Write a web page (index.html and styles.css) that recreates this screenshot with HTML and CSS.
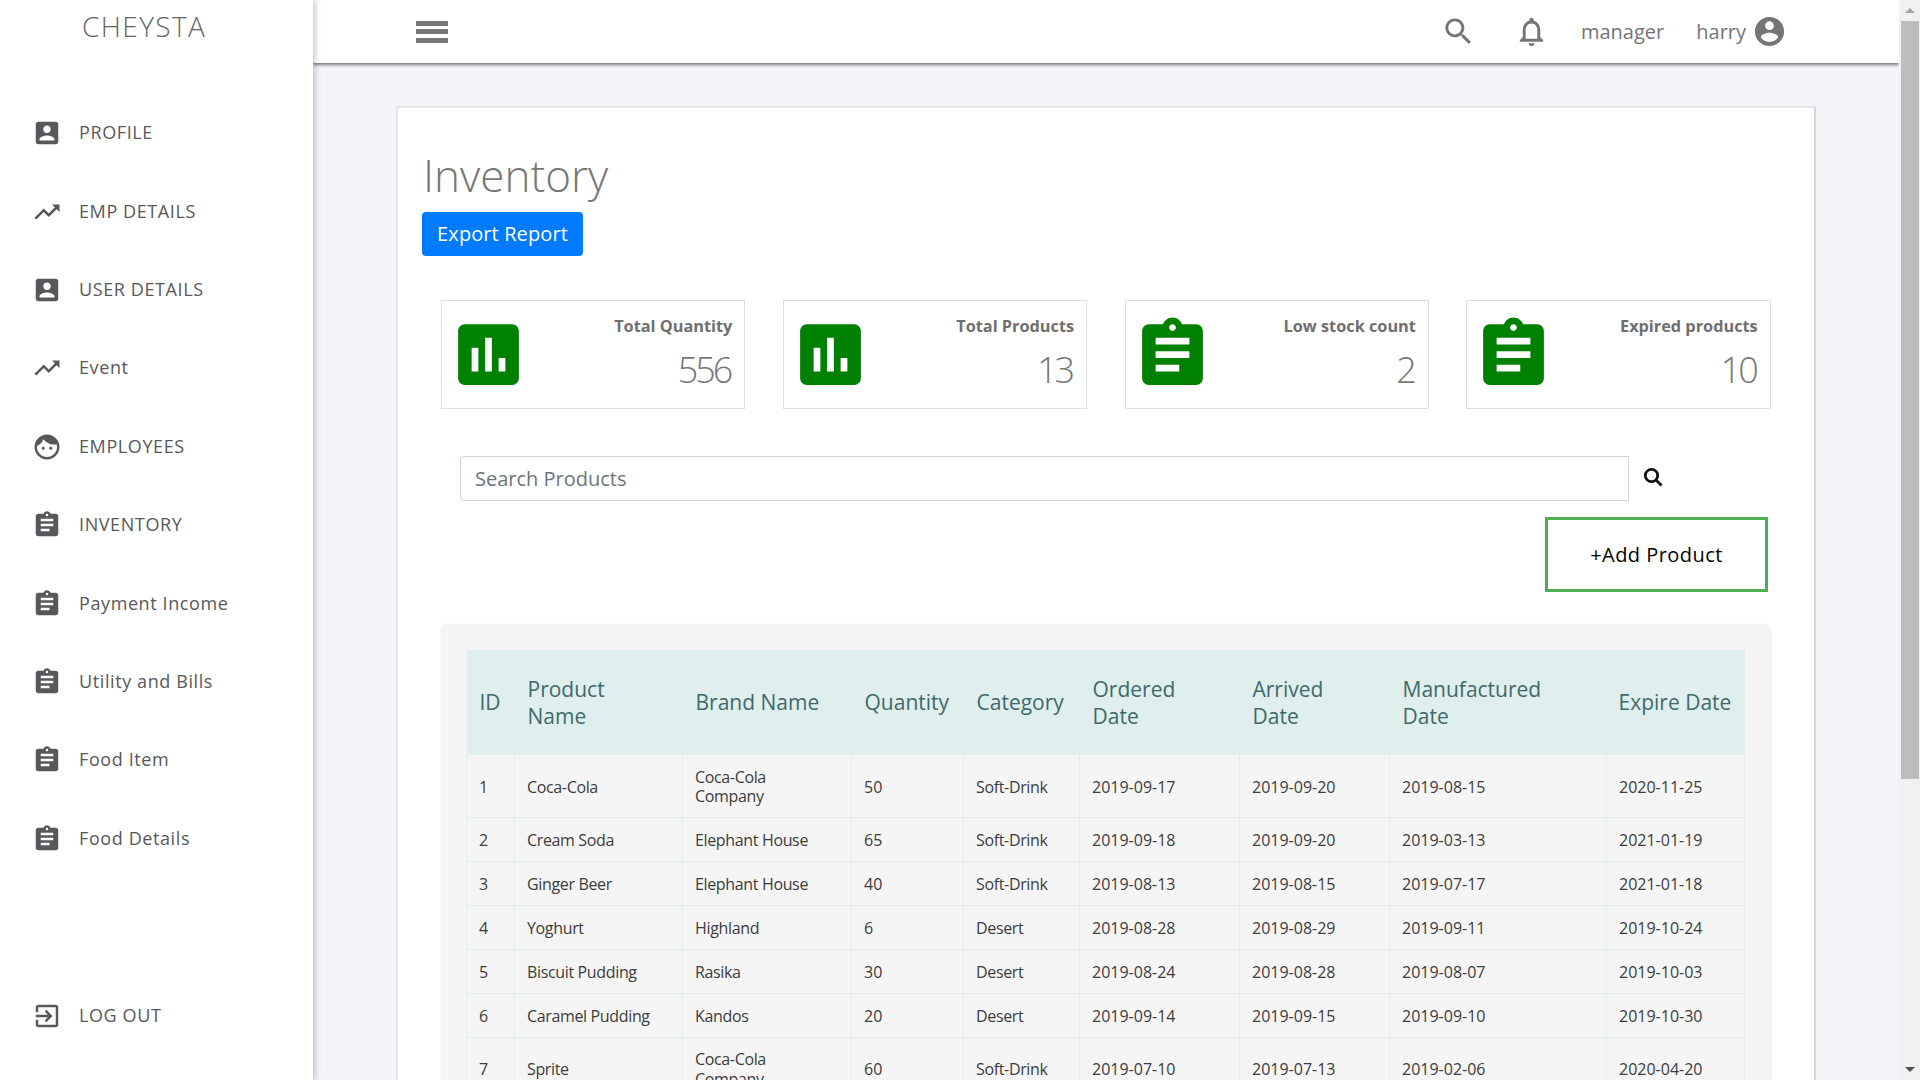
FILE: index.html
```html
<!DOCTYPE html>
<html>
<head>
  <meta charset="UTF-8">
  <title>Inventory</title>
  <link rel="stylesheet" href="styles.css">
</head>
<body>

<svg class="icon-defs" xmlns="http://www.w3.org/2000/svg">
  <symbol id="i-box" viewBox="0 0 24 24"><path d="M3 5v14c0 1.1.89 2 2 2h14c1.1 0 2-.9 2-2V5c0-1.1-.9-2-2-2H5c-1.11 0-2 .9-2 2zm12 4c0 1.66-1.34 3-3 3s-3-1.34-3-3 1.34-3 3-3 3 1.34 3 3zm-9 8c0-2 4-3.1 6-3.1s6 1.1 6 3.1v1H6v-1z"/></symbol>
  <symbol id="i-trend" viewBox="0 0 24 24"><path d="M16 6l2.29 2.29-4.88 4.88-4-4L2 16.59 3.41 18l6-6 4 4 6.3-6.29L22 12V6z"/></symbol>
  <symbol id="i-face" viewBox="0 0 24 24"><path d="M9 11.75c-.69 0-1.25.56-1.25 1.25s.56 1.25 1.25 1.25 1.25-.56 1.25-1.25-.56-1.25-1.25-1.25zm6 0c-.69 0-1.25.56-1.25 1.25s.56 1.25 1.25 1.25 1.25-.56 1.25-1.25-.56-1.25-1.25-1.25zM12 2C6.48 2 2 6.48 2 12s4.48 10 10 10 10-4.48 10-10S17.52 2 12 2zm0 18c-4.41 0-8-3.59-8-8 0-.29.02-.58.05-.86 2.36-1.05 4.23-2.98 5.21-5.37C11.07 8.33 14.05 10 17.42 10c.78 0 1.53-.09 2.25-.26.21.71.33 1.47.33 2.26 0 4.41-3.59 8-8 8z"/></symbol>
  <symbol id="i-clip" viewBox="0 0 24 24"><path d="M19 3h-4.18C14.4 1.84 13.3 1 12 1c-1.3 0-2.4.84-2.82 2H5c-1.1 0-2 .9-2 2v14c0 1.1.9 2 2 2h14c1.1 0 2-.9 2-2V5c0-1.1-.9-2-2-2zm-7 0c.55 0 1 .45 1 1s-.45 1-1 1-1-.45-1-1 .45-1 1-1zm2 14H7v-2h7v2zm3-4H7v-2h10v2zm0-4H7V7h10v2z"/></symbol>
  <symbol id="i-exit" viewBox="0 0 24 24"><path d="M10.09 15.59L11.5 17l5-5-5-5-1.41 1.41L12.67 11H3v2h9.67l-2.58 2.59zM19 3H5c-1.11 0-2 .9-2 2v4h2V5h14v14H5v-4H3v4c0 1.1.89 2 2 2h14c1.1 0 2-.9 2-2V5c0-1.1-.9-2-2-2z"/></symbol>
  <symbol id="i-chart" viewBox="0 0 24 24"><path d="M19 3H5c-1.1 0-2 .9-2 2v14c0 1.1.9 2 2 2h14c1.1 0 2-.9 2-2V5c0-1.1-.9-2-2-2zM9 17H7v-7h2v7zm4 0h-2V7h2v10zm4 0h-2v-4h2v4z"/></symbol>
  <symbol id="i-search" viewBox="0 0 24 24"><path d="M15.5 14h-.79l-.28-.27C15.41 12.59 16 11.11 16 9.5 16 5.91 13.09 3 9.5 3S3 5.91 3 9.5 5.91 16 9.5 16c1.61 0 3.09-.59 4.23-1.57l.27.28v.79l5 4.99L20.49 19l-4.99-5zm-6 0C7.01 14 5 11.99 5 9.5S7.01 5 9.5 5 14 7.01 14 9.5 11.99 14 9.5 14z"/></symbol>
  <symbol id="i-bell" viewBox="0 0 24 24"><path d="M12 22c1.1 0 2-.9 2-2h-4c0 1.1.9 2 2 2zm6-6v-5c0-3.07-1.63-5.64-4.5-6.32V4c0-.83-.67-1.5-1.5-1.5s-1.5.67-1.5 1.5v.68C7.64 5.36 6 7.92 6 11v5l-2 2v1h16v-1l-2-2zm-2 1H8v-6c0-2.48 1.51-4.5 4-4.5s4 2.02 4 4.5v6z"/></symbol>
  <symbol id="i-user" viewBox="0 0 24 24"><path d="M12 2C6.48 2 2 6.48 2 12s4.48 10 10 10 10-4.48 10-10S17.52 2 12 2zm0 3c1.66 0 3 1.34 3 3s-1.34 3-3 3-3-1.34-3-3 1.34-3 3-3zm0 14.2c-2.5 0-4.71-1.28-6-3.22.03-1.99 4-3.08 6-3.08 1.99 0 5.97 1.09 6 3.08-1.29 1.94-3.5 3.22-6 3.22z"/></symbol>
</svg>

<div class="sidebar">
  <div class="logo">CHEYSTA</div>
  <div class="nav">
    <div class="nav-item"><svg class="nav-icon"><use href="#i-box"/></svg>PROFILE</div>
    <div class="nav-item"><svg class="nav-icon"><use href="#i-trend"/></svg>EMP DETAILS</div>
    <div class="nav-item"><svg class="nav-icon"><use href="#i-box"/></svg>USER DETAILS</div>
    <div class="nav-item"><svg class="nav-icon"><use href="#i-trend"/></svg>Event</div>
    <div class="nav-item"><svg class="nav-icon"><use href="#i-face"/></svg>EMPLOYEES</div>
    <div class="nav-item"><svg class="nav-icon"><use href="#i-clip"/></svg>INVENTORY</div>
    <div class="nav-item"><svg class="nav-icon"><use href="#i-clip"/></svg>Payment Income</div>
    <div class="nav-item"><svg class="nav-icon"><use href="#i-clip"/></svg>Utility and Bills</div>
    <div class="nav-item"><svg class="nav-icon"><use href="#i-clip"/></svg>Food Item</div>
    <div class="nav-item"><svg class="nav-icon"><use href="#i-clip"/></svg>Food Details</div>
  </div>
  <div class="nav-item logout"><svg class="nav-icon"><use href="#i-exit"/></svg>LOG OUT</div>
</div>

<div class="main">
  <div class="topbar">
    <div class="burger"><span></span><span></span><span></span></div>
    <div class="top-right">
      <svg class="top-search"><use href="#i-search"/></svg>
      <svg class="top-bell"><use href="#i-bell"/></svg>
      <span class="top-role">manager</span>
      <span class="top-name">harry</span>
      <svg class="top-user"><use href="#i-user"/></svg>
    </div>
  </div>

  <div class="content">
    <div class="card">
      <h1 class="title">Inventory</h1>
      <button class="btn-export">Export Report</button>

      <div class="stats">
        <div class="stat">
          <svg class="stat-icon"><use href="#i-chart"/></svg>
          <div class="stat-text"><div class="stat-label">Total Quantity</div><div class="stat-num">556</div></div>
        </div>
        <div class="stat">
          <svg class="stat-icon"><use href="#i-chart"/></svg>
          <div class="stat-text"><div class="stat-label">Total Products</div><div class="stat-num">13</div></div>
        </div>
        <div class="stat">
          <svg class="stat-icon"><use href="#i-clip"/></svg>
          <div class="stat-text"><div class="stat-label">Low stock count</div><div class="stat-num">2</div></div>
        </div>
        <div class="stat">
          <svg class="stat-icon"><use href="#i-clip"/></svg>
          <div class="stat-text"><div class="stat-label">Expired products</div><div class="stat-num">10</div></div>
        </div>
      </div>

      <div class="search-row">
        <input class="search-input" placeholder="Search Products">
        <svg class="search-btn" viewBox="0 0 20 20"><circle cx="8.5" cy="8.5" r="6.2"/><line x1="13" y1="13" x2="18.5" y2="18.5"/></svg>
      </div>

      <div class="add-row"><button class="btn-add">+Add Product</button></div>

      <div class="panel">
        <table class="products">
          <thead>
            <tr><th>ID</th><th>Product<br>Name</th><th>Brand Name</th><th>Quantity</th><th>Category</th><th>Ordered<br>Date</th><th>Arrived<br>Date</th><th>Manufactured<br>Date</th><th>Expire Date</th></tr>
          </thead>
          <tbody>
            <tr class="tall"><td>1</td><td>Coca-Cola</td><td>Coca-Cola Company</td><td>50</td><td>Soft-Drink</td><td>2019-09-17</td><td>2019-09-20</td><td>2019-08-15</td><td>2020-11-25</td></tr>
            <tr><td>2</td><td>Cream Soda</td><td>Elephant House</td><td>65</td><td>Soft-Drink</td><td>2019-09-18</td><td>2019-09-20</td><td>2019-03-13</td><td>2021-01-19</td></tr>
            <tr><td>3</td><td>Ginger Beer</td><td>Elephant House</td><td>40</td><td>Soft-Drink</td><td>2019-08-13</td><td>2019-08-15</td><td>2019-07-17</td><td>2021-01-18</td></tr>
            <tr><td>4</td><td>Yoghurt</td><td>Highland</td><td>6</td><td>Desert</td><td>2019-08-28</td><td>2019-08-29</td><td>2019-09-11</td><td>2019-10-24</td></tr>
            <tr><td>5</td><td>Biscuit Pudding</td><td>Rasika</td><td>30</td><td>Desert</td><td>2019-08-24</td><td>2019-08-28</td><td>2019-08-07</td><td>2019-10-03</td></tr>
            <tr><td>6</td><td>Caramel Pudding</td><td>Kandos</td><td>20</td><td>Desert</td><td>2019-09-14</td><td>2019-09-15</td><td>2019-09-10</td><td>2019-10-30</td></tr>
            <tr class="tall"><td>7</td><td>Sprite</td><td>Coca-Cola Company</td><td>60</td><td>Soft-Drink</td><td>2019-07-10</td><td>2019-07-13</td><td>2019-02-06</td><td>2020-04-20</td></tr>
          </tbody>
        </table>
      </div>
    </div>
  </div>
</div>

<div class="scrollbar">
  <div class="arrow-up"></div>
  <div class="thumb"></div>
  <div class="arrow-down"></div>
</div>

</body>
</html>
```

FILE: styles.css
```css
* {
  box-sizing: border-box;
}
html, body {
  margin: 0;
  height: 1080px;
  overflow: hidden;
}
body {
  display: flex;
  background-color: #f4f5f9;
  font-family: "Open Sans", "Noto Sans", sans-serif;
  color: #777;
}
.icon-defs {
  display: none;
}

/* sidebar */
.sidebar {
  width: 313px;
  flex: none;
  height: 1080px;
  background-color: #fff;
  box-shadow: 2px 0 6px rgba(60, 60, 90, 0.3);
  display: flex;
  flex-direction: column;
  z-index: 2;
}
.logo {
  height: 54px;
  line-height: 52px;
  padding-left: 82px;
  font-size: 28px;
  font-weight: 300;
  letter-spacing: 1.4px;
  color: #666;
}
.nav {
  margin-top: 39px;
}
.nav-item {
  height: 78.4px;
  display: flex;
  align-items: center;
  font-size: 18px;
  letter-spacing: 0.6px;
  color: #58585c;
}
.nav-icon {
  width: 30px;
  height: 30px;
  margin: 2px 17.5px 0 31.5px;
  fill: #58585c;
  flex: none;
}
.logout {
  margin-top: auto;
  margin-bottom: 26px;
}

/* top bar */
.main {
  flex: 1;
  min-width: 0;
  height: 1080px;
  overflow: hidden;
}
.topbar {
  height: 63px;
  background-color: #fff;
  box-shadow: 0 2px 3px rgba(0, 0, 0, 0.5);
  display: flex;
  align-items: center;
  justify-content: space-between;
  padding-left: 103px;
  position: relative;
}
.burger span {
  display: block;
  width: 32px;
  height: 5px;
  margin-bottom: 3.5px;
  background-color: #777;
}
.burger span:last-child {
  margin-bottom: 0;
}
.top-right {
  display: flex;
  align-items: center;
  padding-right: 112px;
  font-size: 20px;
  color: #757575;
}
.top-right svg {
  width: 35px;
  height: 35px;
  fill: #757575;
  flex: none;
}
.top-bell {
  margin-left: 38px;
}
.top-role {
  margin-left: 32px;
}
.top-name {
  margin-left: 32px;
  margin-right: 6px;
}

/* card */
.content {
  padding: 43px 83px 0 83px;
}
.card {
  height: 1100px;
  background-color: #fff;
  border: 2px solid #e6e7eb;
  border-right-color: #d5d6da;
  padding: 0 24px;
  overflow: hidden;
}
.title {
  margin: 37px 0 0 1px;
  font-size: 44px;
  line-height: 60px;
  font-weight: 300;
  color: #777;
}
.btn-export {
  display: block;
  width: 161px;
  height: 44px;
  margin-top: 7px;
  padding: 0 0 2px;
  background-color: #007bff;
  color: #fff;
  border: none;
  border-radius: 4px;
  font-family: inherit;
  font-size: 20px;
  letter-spacing: 0.1px;
}

/* stats */
.stats {
  display: flex;
  gap: 37.5px;
  margin: 44px 0 0 19px;
}
.stat {
  width: 304.3px;
  height: 109px;
  border: 1px solid #dcdee2;
  background-color: #fff;
  display: flex;
  padding-right: 12px;
}
.stat-icon {
  width: 81px;
  height: 81px;
  margin: 13px 0 0 6px;
  fill: #008000;
  flex: none;
}
.stat-text {
  flex: 1;
  text-align: right;
}
.stat-label {
  margin-top: 13px;
  font-size: 16.3px;
  line-height: 24px;
  font-weight: 700;
  color: #6f6f6f;
}
.stat-num {
  margin: 9px 2px 0 0;
  font-size: 36px;
  line-height: 46px;
  font-weight: 300;
  letter-spacing: -3px;
  color: #777;
}

/* search */
.search-row {
  display: flex;
  margin: 47px 0 0 38px;
}
.search-input {
  width: 1169px;
  height: 45px;
  padding: 0 14px;
  border: 1px solid #ced4da;
  border-radius: 4px 0 0 4px;
  font-family: inherit;
  font-size: 20px;
}
.search-input::placeholder {
  color: #6c757d;
}
.search-btn {
  width: 20px;
  height: 20px;
  margin: 11px 0 0 14px;
  fill: none;
  stroke: #111;
  stroke-width: 2.8;
}
.add-row {
  margin-top: 16px;
  padding-right: 22px;
  display: flex;
  justify-content: flex-end;
}
.btn-add {
  width: 223px;
  height: 75px;
  background-color: #fff;
  border: 3px solid #4caf50;
  color: #000;
  font-family: inherit;
  font-size: 20px;
  letter-spacing: 0.45px;
}

/* table */
.panel {
  margin: 33px 0 0 20px;
  width: 1328px;
  height: 600px;
  background-color: #f5f5f5;
  border-radius: 6px;
  box-shadow: 0 0 3px rgba(0, 0, 0, 0.15);
  padding: 25px 25px 0 24px;
}
.products {
  width: 1278px;
  border-collapse: collapse;
  table-layout: fixed;
}
.products th {
  height: 105px;
  padding: 0 13px;
  background-color: #dfefee;
  color: #40696b;
  font-size: 21px;
  line-height: 27px;
  font-weight: 400;
  text-align: left;
}
.products th:last-child {
  padding: 0 0 0 12px;
  white-space: nowrap;
}
.products td {
  height: 44px;
  padding: 3px 13px 0 12px;
  border: 1px solid #e1eeed;
  border-top: none;
  font-size: 16px;
  line-height: 19.5px;
  color: #3c3c3c;
}
.products td:nth-child(2),
.products td:nth-child(3),
.products td:nth-child(5) {
  letter-spacing: -0.35px;
}
.products tr.tall td {
  height: 62px;
}
.products th:nth-child(1) { width: 48px; }
.products th:nth-child(2) { width: 168px; }
.products th:nth-child(3) { width: 169px; }
.products th:nth-child(4) { width: 112px; }
.products th:nth-child(5) { width: 116px; }
.products th:nth-child(6) { width: 160px; }
.products th:nth-child(7) { width: 150px; }
.products th:nth-child(8) { width: 217px; }
.products th:nth-child(9) { width: 138px; }

/* scrollbar */
.scrollbar {
  width: 21px;
  flex: none;
  height: 1080px;
  background-color: #f1f1f1;
  display: flex;
  flex-direction: column;
  align-items: center;
}
.arrow-up {
  margin-top: 8px;
  border-left: 5px solid transparent;
  border-right: 5px solid transparent;
  border-bottom: 5px solid #a3a3a3;
}
.thumb {
  width: 18px;
  height: 758px;
  margin-top: 8px;
  background-color: #bdbdbd;
}
.arrow-down {
  margin-top: auto;
  margin-bottom: 8px;
  border-left: 5px solid transparent;
  border-right: 5px solid transparent;
  border-top: 5px solid #505050;
}
```
